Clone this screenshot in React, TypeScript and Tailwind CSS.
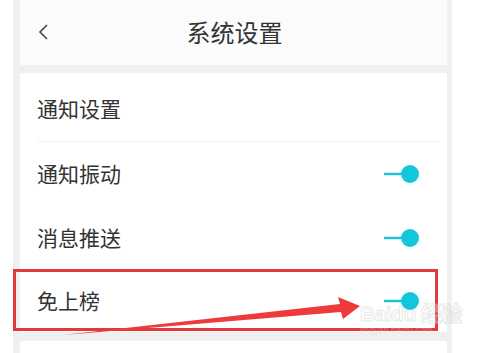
import React from 'react';

const Toggle = () => (
	<svg width="40" height="22" viewBox="0 0 40 22">
		<line x1="2" y1="11" x2="26" y2="11" stroke="#20c0d4" strokeWidth="2.5" />
		<circle cx="28" cy="11" r="9" fill="#12c6dc" />
	</svg>
);

const rows = [
	{ label: '通知振动', h: 'h-[64px]' },
	{ label: '消息推送', h: 'h-[64px]' },
	{ label: '免上榜', h: 'h-[62px]' },
];

export default function App() {
	return (
		<div
			className="relative w-[478px] h-[353px] overflow-hidden bg-white"
			style={{ fontFamily: '"Noto Sans CJK SC", "Noto Sans", sans-serif' }}
		>
			<div className="ml-[13px] w-[439px] h-full bg-[#f0f0f0] pl-[7px] pr-[5px]">
				{/* header */}
				<div className="relative h-[65px] bg-[#fbfbfb] flex items-center justify-center pb-[2px]">
					<svg className="absolute left-[17px] top-[23px]" width="14" height="18" viewBox="0 0 14 18">
						<polyline points="10,2 3,9 10,16" fill="none" stroke="#444" strokeWidth="1.6" />
					</svg>
					<span className="text-[24px] text-[#333] ml-[2px]">系统设置</span>
				</div>

				<div className="mt-[8px] bg-white">
					<div className="h-[68px] flex items-center pl-[17px] pt-[3px]">
						<span className="text-[21px] text-[#333]">通知设置</span>
					</div>
					<div className="ml-[17px] mr-[7px] h-px bg-[#f2f2f2]" />
					{rows.map((r) => (
						<div key={r.label} className={`${r.h} flex items-center justify-between pl-[17px] pr-[25px]`}>
							<span className="text-[21px] text-[#333]">{r.label}</span>
							<Toggle />
						</div>
					))}
				</div>

				<div className="mt-[9px] h-[40px] bg-white" />
			</div>

			{/* annotation */}
			<div className="absolute left-[13px] top-[269px] w-[425px] h-[62px] border-[3px] border-[#e2393c]" />
			<svg className="absolute left-0 top-0" width="478" height="353" viewBox="0 0 478 353">
				<polygon points="63,335 340,304 338,297 360,306 343,319 341,312" fill="#ee3a3a" />
			</svg>

			{/* watermark */}
			<div className="absolute left-[360px] top-[303px] flex flex-col items-start opacity-40">
				<span
					className="text-[21px] leading-[22px] text-white font-bold tracking-tight"
					style={{ WebkitTextStroke: '1px #c8c8c8', fontFamily: '"Liberation Sans", "Noto Sans CJK SC", sans-serif' }}
				>
					Baidu 经验
				</span>
				<span className="text-[9px] leading-[10px] text-[#d8d8d8]" style={{ fontFamily: '"Liberation Sans", sans-serif' }}>
					jingyan.baidu.com
				</span>
			</div>
		</div>
	);
}
